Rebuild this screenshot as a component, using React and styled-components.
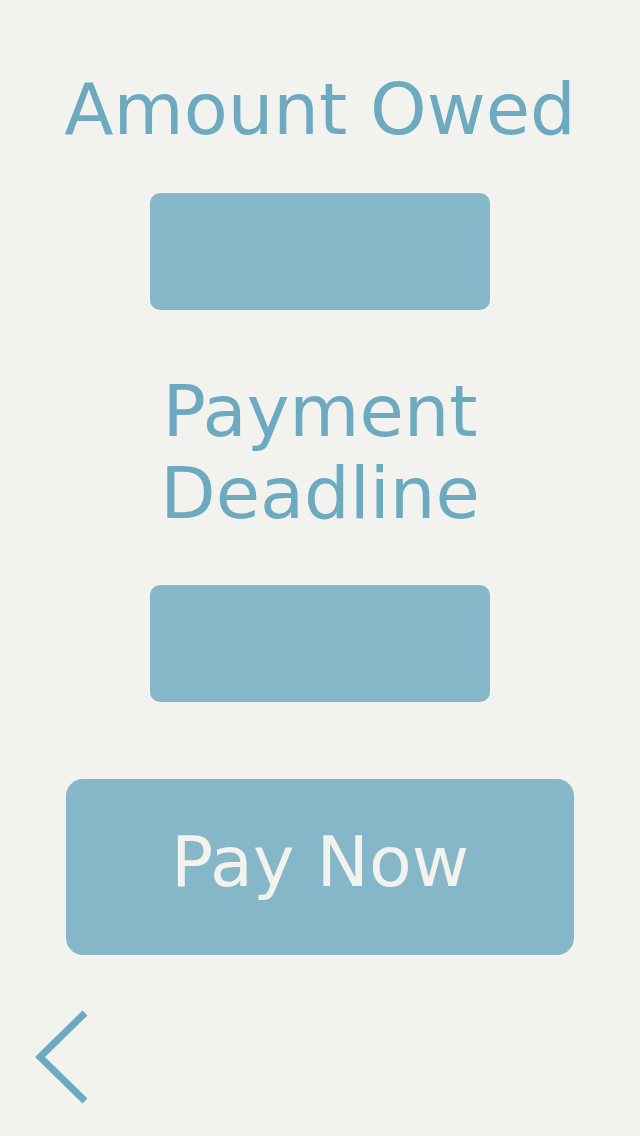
import React from 'react'
import styled, { createGlobalStyle } from 'styled-components'

const GlobalStyle = createGlobalStyle`
  html, body {
    margin: 0;
    padding: 0;
    background: #f2f2ee;
  }
  body {
    font-family: 'DejaVu Sans', 'Liberation Sans', sans-serif;
  }
`

const Screen = styled.div`
  width: 640px;
  height: 1136px;
  box-sizing: border-box;
  display: flex;
  flex-direction: column;
  align-items: center;
  background: #f2f2ee;
  overflow: hidden;
`

const Heading = styled.h1`
  margin: ${p => p.margin || '0'};
  font-size: 72px;
  line-height: 82px;
  font-weight: normal;
  color: #6eaabf;
  text-align: center;
  white-space: ${p => (p.nowrap ? 'nowrap' : 'normal')};
`

const ValueBox = styled.div`
  width: 340px;
  height: 117px;
  margin: ${p => p.margin || '0'};
  border-radius: 10px;
  background: #85b7c8;
`

const PayButton = styled.button`
  width: 508px;
  height: 176px;
  margin-top: 77px;
  border: none;
  border-radius: 17px;
  background: #85b7c8;
  color: #f2f2ee;
  font-family: inherit;
  font-size: 70px;
  display: flex;
  align-items: center;
  justify-content: center;
  padding: 0 0 10px;
  cursor: pointer;
`

const Footer = styled.div`
  align-self: stretch;
  padding: 52px 0 0 30px;
`

const BackButton = styled.button`
  background: none;
  border: none;
  padding: 0;
  display: block;
  cursor: pointer;
`

const ChevronLeft = () => (
  <svg width='60' height='100' viewBox='0 0 60 100'>
    <polyline points='55,6 10,50 55,94' fill='none' stroke='#6eaabf' strokeWidth='7' />
  </svg>
)

export default function App() {
  return (
    <>
      <GlobalStyle />
      <Screen>
        <Heading margin='68px 0 0' nowrap>Amount Owed</Heading>
        <ValueBox margin='43px 0 0' />
        <Heading margin='60px 0 0'>
          Payment
          <br />
          Deadline
        </Heading>
        <ValueBox margin='51px 0 0' />
        <PayButton>Pay Now</PayButton>
        <Footer>
          <BackButton aria-label='back'>
            <ChevronLeft />
          </BackButton>
        </Footer>
      </Screen>
    </>
  )
}
